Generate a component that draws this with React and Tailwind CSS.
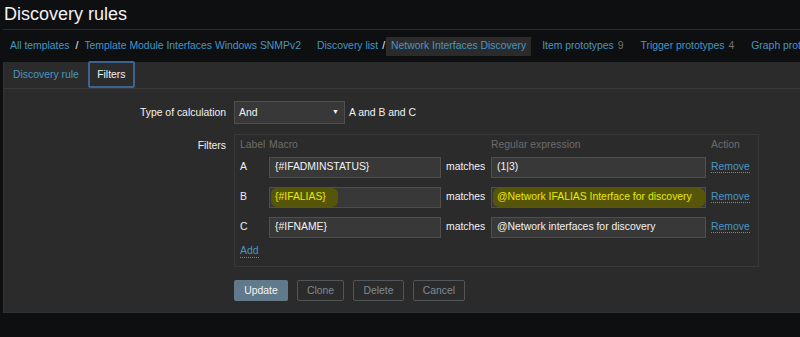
import React from 'react'

const crumbs = [
  { text: 'Item prototypes', count: '9' },
  { text: 'Trigger prototypes', count: '4' },
  { text: 'Graph prototypes', count: '' },
]

const rows = [
  { label: 'A', macro: '{#IFADMINSTATUS}', regex: '(1|3)', mark: false },
  { label: 'B', macro: '{#IFALIAS}', regex: '@Network IFALIAS Interface for discovery', mark: true },
  { label: 'C', macro: '{#IFNAME}', regex: '@Network interfaces for discovery', mark: false },
]

const FilterRow = ({ row }) => (
  <div className="flex items-center h-[30px]">
    <div className="w-[29px] text-[#f2f2f2]">{row.label}</div>
    <div className="w-[172px] h-[21px] bg-[#383838] border border-[#4f4f4f] flex items-center pl-[1px]">
      {row.mark ? (
        <span className="bg-[#56550a] text-[#e9e900] h-[19px] flex items-center px-[4px] pr-[12px] rounded-[6px]">{row.macro}</span>
      ) : (
        <span className="pl-[4px] text-[#f2f2f2]">{row.macro}</span>
      )}
    </div>
    <div className="w-[50px] pl-[5px] text-[#f2f2f2]">matches</div>
    <div className="w-[215px] h-[21px] bg-[#383838] border border-[#4f4f4f] flex items-center pl-[1px]">
      {row.mark ? (
        <span className="bg-[#56550a] text-[#e9e900] h-[19px] flex-1 flex items-center px-[4px] rounded-[6px]">{row.regex}</span>
      ) : (
        <span className="pl-[4px] text-[#f2f2f2]">{row.regex}</span>
      )}
    </div>
    <div className="pl-[5px]">
      <span className="text-[#4796c4] border-b border-dotted border-[#4796c4] leading-[12px]">Remove</span>
    </div>
  </div>
)

const App = () => {
  return (
    <div className="w-[800px] h-[337px] bg-[#0e0f11] overflow-hidden text-[10.4px] font-['Liberation_Sans',Arial,sans-serif]">
      <div className="h-[29px] pl-[4px] flex items-center text-[18px] text-[#f2f2f2]">Discovery rules</div>
      <div className="ml-[3px] border-t border-[#2e2e2e] h-[33px] flex items-center whitespace-nowrap pl-[7px]">
        <span className="text-[#4796c4]">All templates</span>
        <span className="text-[#f2f2f2] px-[6px]">/</span>
        <span className="text-[#4796c4]">Template Module Interfaces Windows SNMPv2</span>
        <span className="text-[#4796c4] ml-[16px]">Discovery list</span>
        <span className="text-[#f2f2f2] pl-[4px] pr-[1px]">/</span>
        <span className="text-[#4796c4] bg-[#2b2b2b] h-[19px] flex items-center px-[5px]">Network Interfaces Discovery</span>
        {crumbs.map((c) => (
          <span key={c.text} className="ml-[11px] mr-[6px]">
            <span className="text-[#4796c4]">{c.text}</span>
            {c.count && <span className="text-[#737373] ml-[4px]">{c.count}</span>}
          </span>
        ))}
      </div>
      <div className="ml-[3px] h-[251px] bg-[#2b2b2b] border-l border-b border-[#333]">
        <div className="h-[27px] border-b border-[#383838] flex items-end pl-[9px]">
          <div className="h-[26px] flex items-center text-[#4796c4] pr-[9px]">Discovery rule</div>
          <div className="h-[27px] w-[47px] flex items-center justify-center text-[#f2f2f2] border-2 border-[#3d6390] rounded-[2px]">Filters</div>
        </div>
        <div className="pt-[12px]">
          <div className="flex items-center">
            <div className="w-[230px] text-right text-[#f2f2f2] pr-[8px]">Type of calculation</div>
            <div className="w-[111px] h-[23px] bg-[#383838] border border-[#4f4f4f] flex items-center justify-between pl-[4px] pr-[5px] text-[#f2f2f2]">
              <span>And</span>
              <span className="text-[7px]">▼</span>
            </div>
            <div className="pl-[4px] text-[#f2f2f2]">A and B and C</div>
          </div>
          <div className="flex mt-[10px]">
            <div className="w-[230px] text-right text-[#f2f2f2] pr-[8px] pt-[4px]">Filters</div>
            <div className="w-[525px] h-[133px] border border-[#383838] pt-[2px] pl-[5px]">
              <div className="h-[15px] flex items-center text-[#6b6b6b]">
                <div className="w-[29px]">Label</div>
                <div className="w-[222px]">Macro</div>
                <div className="w-[220px]">Regular expression</div>
                <div>Action</div>
              </div>
              {rows.map((r) => (
                <FilterRow key={r.label} row={r} />
              ))}
              <div className="h-[18px] flex items-center">
                <span className="text-[#4796c4] border-b border-dotted border-[#4796c4] leading-[12px]">Add</span>
              </div>
            </div>
          </div>
          <div className="flex gap-[9px] ml-[230px] mt-[13px]">
            <div className="w-[54px] h-[21px] bg-[#617a8b] rounded-[2px] flex items-center justify-center text-[#f2f2f2]">Update</div>
            <div className="w-[47px] h-[21px] border border-[#505559] rounded-[2px] flex items-center justify-center text-[#7f8a93]">Clone</div>
            <div className="w-[51px] h-[21px] border border-[#505559] rounded-[2px] flex items-center justify-center text-[#7f8a93]">Delete</div>
            <div className="w-[52px] h-[21px] border border-[#505559] rounded-[2px] flex items-center justify-center text-[#7f8a93]">Cancel</div>
          </div>
        </div>
      </div>
    </div>
  )
}

export default App
